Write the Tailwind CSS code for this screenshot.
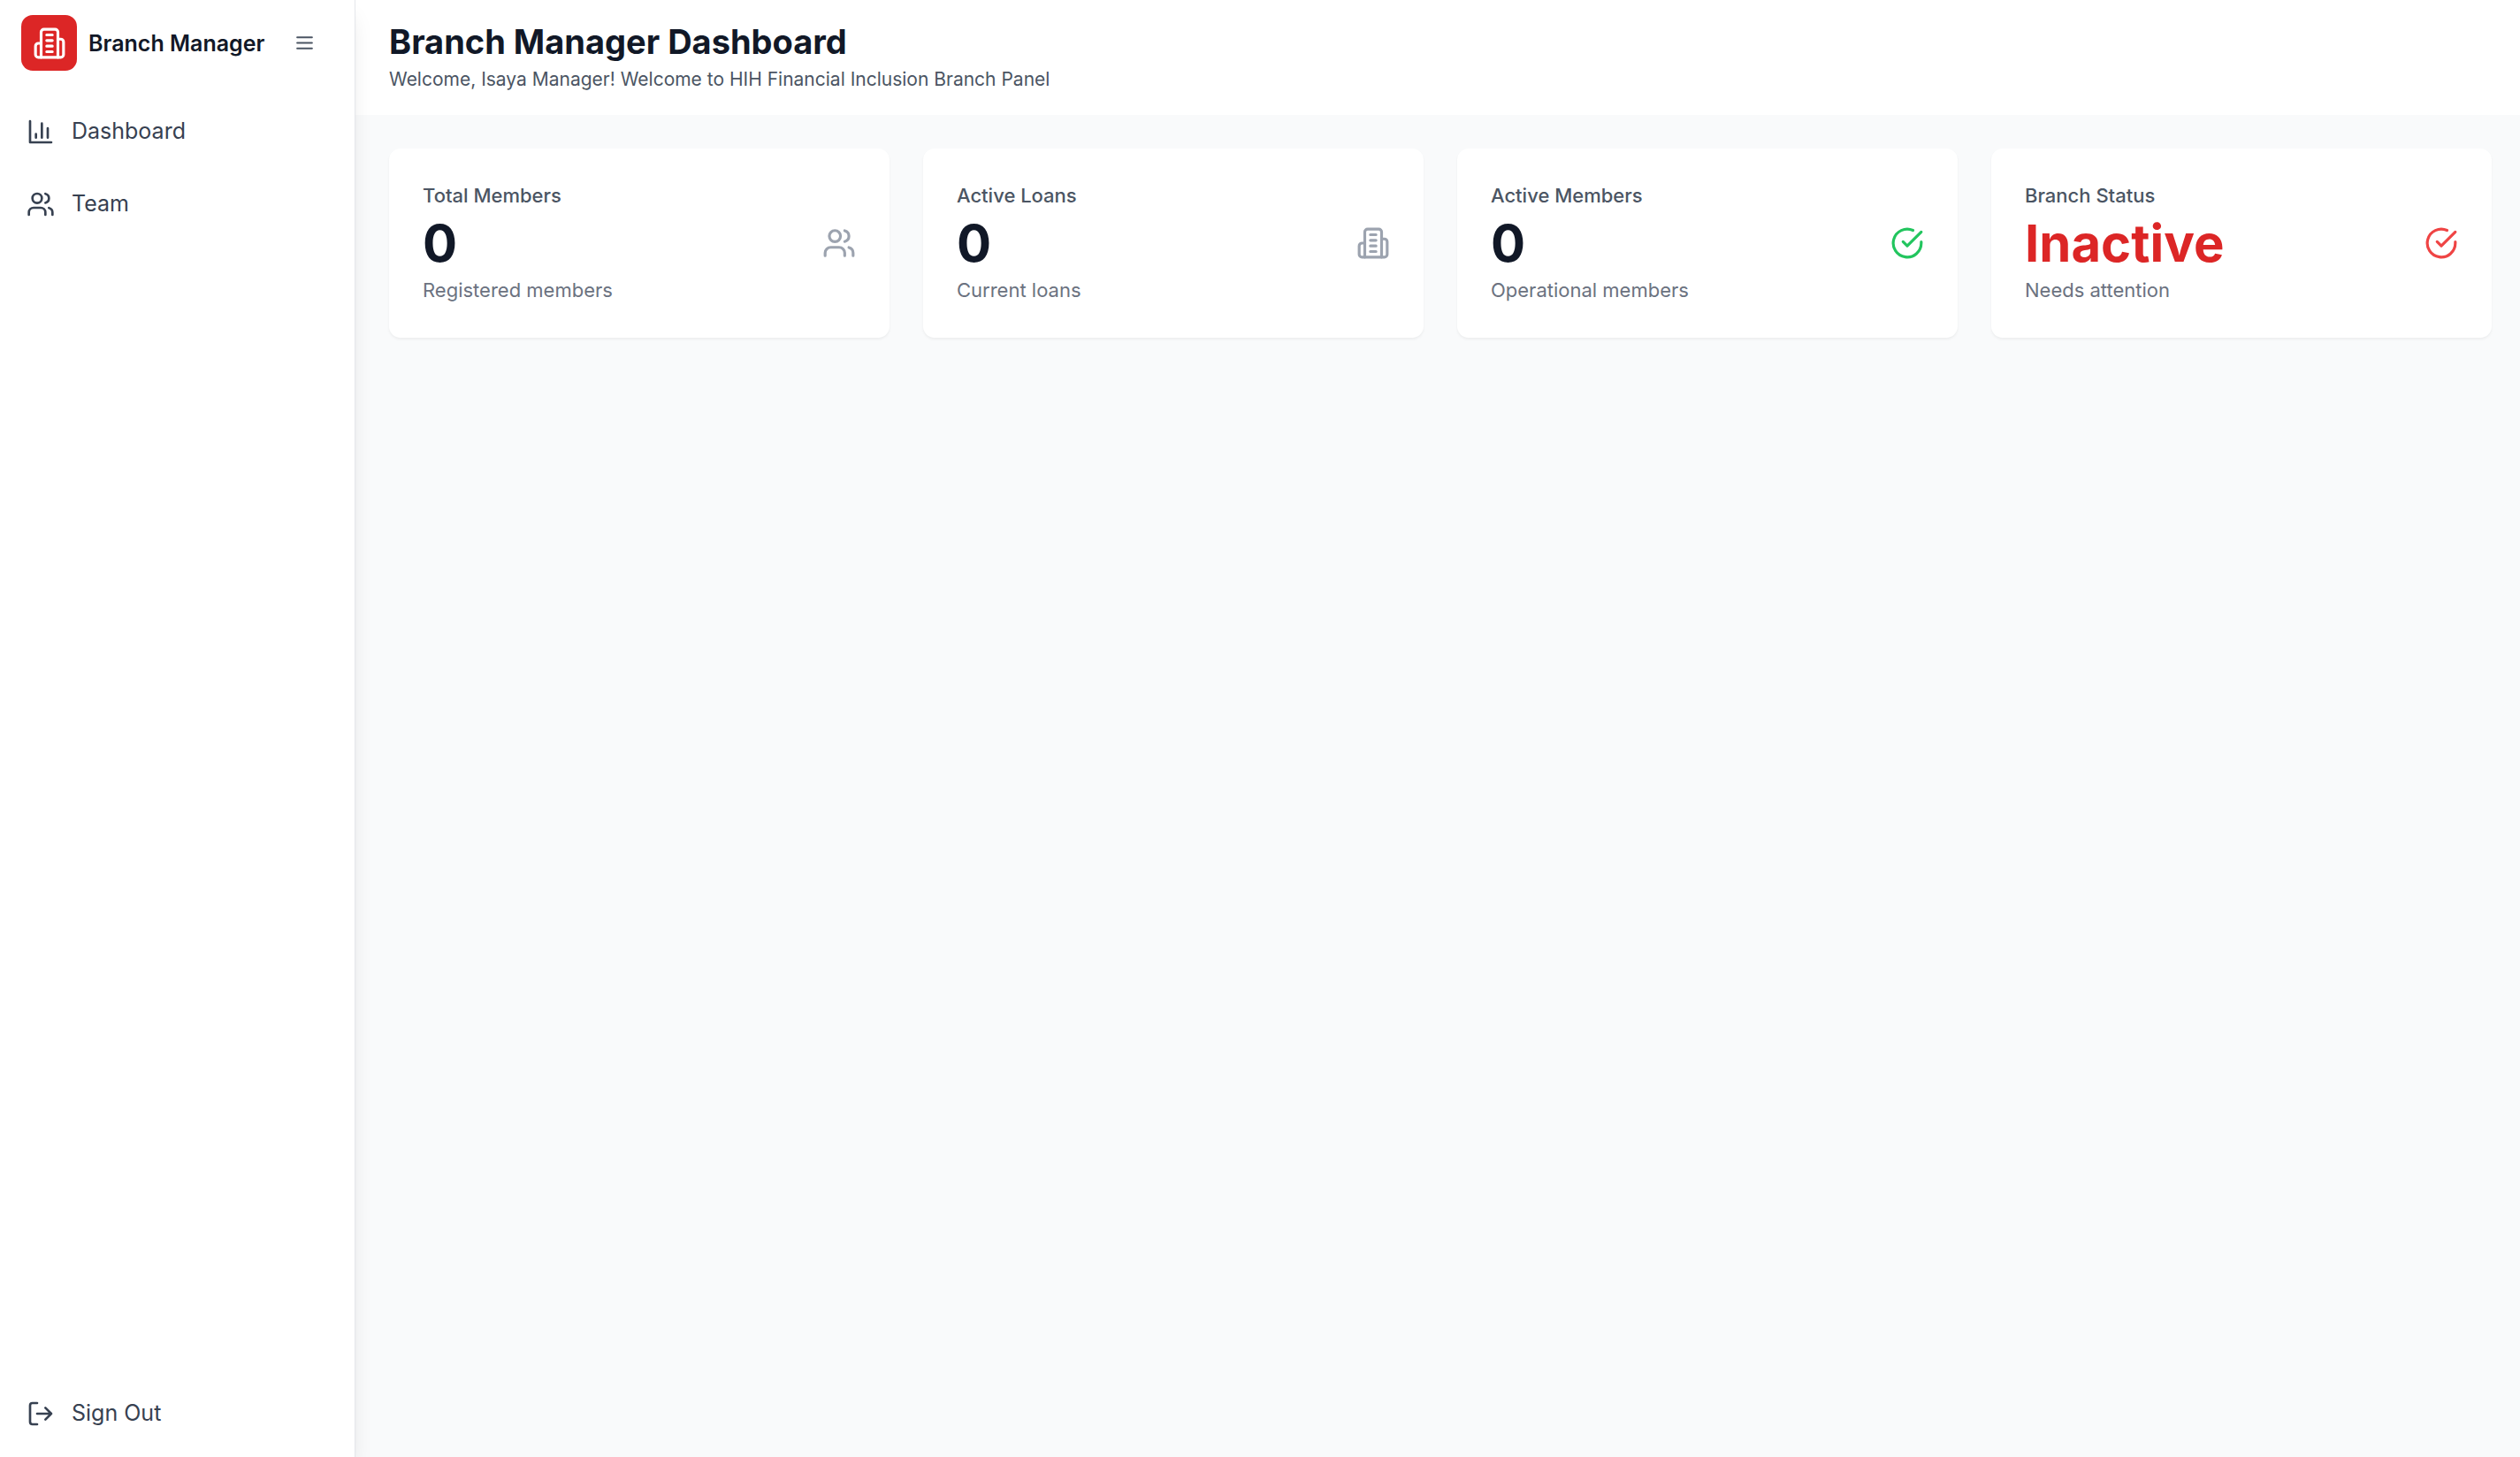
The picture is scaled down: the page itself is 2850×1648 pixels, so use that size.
<!DOCTYPE html>
<html lang="en">
<head>
<meta charset="utf-8">
<meta name="viewport" content="width=device-width, initial-scale=1">
<title>Branch Manager Dashboard</title>
<script src="https://cdn.jsdelivr.net/npm/@tailwindcss/browser@4"></script>
</head>
<body class="flex min-h-screen bg-[#f9fafb] font-[Inter,sans-serif] text-[#111827]">
<svg class="hidden" aria-hidden="true">
  <symbol id="building" viewBox="0 0 24 24"><path d="M6 22V4a2 2 0 0 1 2-2h8a2 2 0 0 1 2 2v18Z"/><path d="M6 12H4a2 2 0 0 0-2 2v6a2 2 0 0 0 2 2h2"/><path d="M18 9h2a2 2 0 0 1 2 2v9a2 2 0 0 1-2 2h-2"/><path d="M10 6h4M10 10h4M10 14h4M10 18h4"/></symbol>
  <symbol id="users" viewBox="0 0 24 24"><path d="M16 21v-2a4 4 0 0 0-4-4H6a4 4 0 0 0-4 4v2"/><circle cx="9" cy="7" r="4"/><path d="M22 21v-2a4 4 0 0 0-3-3.87"/><path d="M16 3.13a4 4 0 0 1 0 7.75"/></symbol>
  <symbol id="check" viewBox="0 0 24 24"><path d="M22 11.08V12a10 10 0 1 1-5.93-9.14"/><path d="m9 11 3 3L22 4"/></symbol>
  <symbol id="chart" viewBox="0 0 24 24"><path d="M3 3v18h18"/><path d="M18 17V9M13 17V5M8 17v-3"/></symbol>
  <symbol id="logout" viewBox="0 0 24 24"><path d="M9 21H5a2 2 0 0 1-2-2V5a2 2 0 0 1 2-2h4"/><path d="m16 17 5-5-5-5M21 12H9"/></symbol>
  <symbol id="menu" viewBox="0 0 24 24"><path d="M4 6h16M4 12h16M4 18h16"/></symbol>
</svg>

<aside class="z-10 flex w-[402px] shrink-0 flex-col border-r border-[#e5e7eb] bg-white shadow-[0_16px_24px_-5px_rgb(0_0_0/0.1),0_6px_9px_-6px_rgb(0_0_0/0.1)]">
  <div class="flex items-center justify-between pt-[17px] pr-[38px] pl-6">
    <div class="flex items-center gap-[13px]">
      <span class="flex size-[63px] items-center justify-center rounded-[13px] bg-[#dc2626] text-white">
        <svg class="size-[38px] fill-none stroke-current stroke-2 [stroke-linecap:round] [stroke-linejoin:round]" aria-hidden="true"><use href="#building"/></svg>
      </span>
      <span class="text-[25px] leading-[38px] font-semibold whitespace-nowrap">Branch Manager</span>
    </div>
    <button type="button" aria-label="Toggle menu" class="p-[6px] text-[#4b5563]">
      <svg class="size-[25px] fill-none stroke-current stroke-2 [stroke-linecap:round] [stroke-linejoin:round]" aria-hidden="true"><use href="#menu"/></svg>
    </button>
  </div>
  <nav class="mt-[31px] flex flex-col gap-[6px] px-[11px]">
    <a href="#dashboard" class="flex h-[76px] items-center gap-[19px] px-[19px] text-[25px] text-[#374151]">
      <svg class="size-8 fill-none stroke-current stroke-2 [stroke-linecap:round] [stroke-linejoin:round]" aria-hidden="true"><use href="#chart"/></svg>
      Dashboard
    </a>
    <a href="#team" class="flex h-[76px] items-center gap-[19px] px-[19px] text-[25px] text-[#374151]">
      <svg class="size-8 fill-none stroke-current stroke-2 [stroke-linecap:round] [stroke-linejoin:round]" aria-hidden="true"><use href="#users"/></svg>
      Team
    </a>
  </nav>
  <div class="mt-auto px-[11px] pb-[11px]">
    <button type="button" class="flex h-[76px] w-full items-center gap-[19px] px-[19px] text-[25px] text-[#374151]">
      <svg class="size-8 fill-none stroke-current stroke-2 [stroke-linecap:round] [stroke-linejoin:round]" aria-hidden="true"><use href="#logout"/></svg>
      Sign Out
    </button>
  </div>
</aside>

<div class="min-w-0 flex-1">
  <header class="flex flex-col gap-[2px] bg-white px-[38px] pt-[22px] pb-[25px]">
    <h1 class="text-[38px] leading-[50px] font-bold">Branch Manager Dashboard</h1>
    <p class="text-[21px] leading-[31px] text-[#4b5563]">Welcome, Isaya Manager! Welcome to HIH Financial Inclusion Branch Panel</p>
  </header>
  <main class="grid grid-cols-4 gap-[38px] pt-[38px] pr-8 pl-[38px]">
    <section class="flex items-center justify-between rounded-[13px] bg-white p-[38px] shadow-[0_2px_3px_0_rgb(0_0_0/0.05)]">
      <div>
        <h2 class="text-[22px] leading-[31px] font-medium text-[#4b5563]">Total Members</h2>
        <p class="my-[6px] text-[58px] leading-[64px] font-bold">0</p>
        <p class="text-[22px] leading-[31px] text-[#6b7280]">Registered members</p>
      </div>
      <svg class="size-[38px] fill-none stroke-[#9ca3af] stroke-2 [stroke-linecap:round] [stroke-linejoin:round]" aria-hidden="true"><use href="#users"/></svg>
    </section>
    <section class="flex items-center justify-between rounded-[13px] bg-white p-[38px] shadow-[0_2px_3px_0_rgb(0_0_0/0.05)]">
      <div>
        <h2 class="text-[22px] leading-[31px] font-medium text-[#4b5563]">Active Loans</h2>
        <p class="my-[6px] text-[58px] leading-[64px] font-bold">0</p>
        <p class="text-[22px] leading-[31px] text-[#6b7280]">Current loans</p>
      </div>
      <svg class="size-[38px] fill-none stroke-[#9ca3af] stroke-2 [stroke-linecap:round] [stroke-linejoin:round]" aria-hidden="true"><use href="#building"/></svg>
    </section>
    <section class="flex items-center justify-between rounded-[13px] bg-white p-[38px] shadow-[0_2px_3px_0_rgb(0_0_0/0.05)]">
      <div>
        <h2 class="text-[22px] leading-[31px] font-medium text-[#4b5563]">Active Members</h2>
        <p class="my-[6px] text-[58px] leading-[64px] font-bold">0</p>
        <p class="text-[22px] leading-[31px] text-[#6b7280]">Operational members</p>
      </div>
      <svg class="size-[38px] fill-none stroke-[#22c55e] stroke-2 [stroke-linecap:round] [stroke-linejoin:round]" aria-hidden="true"><use href="#check"/></svg>
    </section>
    <section class="flex items-center justify-between rounded-[13px] bg-white p-[38px] shadow-[0_2px_3px_0_rgb(0_0_0/0.05)]">
      <div>
        <h2 class="text-[22px] leading-[31px] font-medium text-[#4b5563]">Branch Status</h2>
        <p class="my-[6px] text-[58px] leading-[64px] font-bold text-[#dc2626]">Inactive</p>
        <p class="text-[22px] leading-[31px] text-[#6b7280]">Needs attention</p>
      </div>
      <svg class="size-[38px] fill-none stroke-[#ef4444] stroke-2 [stroke-linecap:round] [stroke-linejoin:round]" aria-hidden="true"><use href="#check"/></svg>
    </section>
  </main>
</div>
</body>
</html>
